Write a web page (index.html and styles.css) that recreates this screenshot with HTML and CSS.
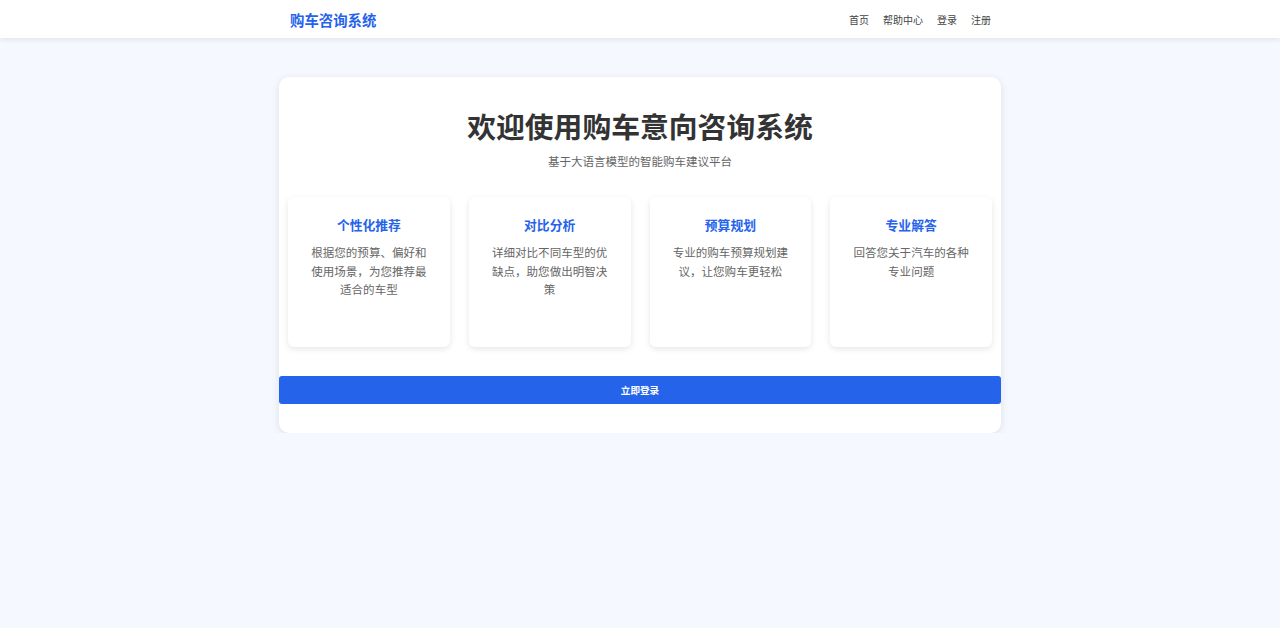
FILE: index.html
```html
<!DOCTYPE html>
<html lang="zh-CN">
<head>
<meta charset="utf-8">
<title>购车咨询系统</title>
<link rel="stylesheet" href="styles.css">
</head>
<body>
<header class="navbar">
  <div class="nav-inner">
    <a class="logo" href="#">购车咨询系统</a>
    <nav class="nav-links">
      <a href="#">首页</a>
      <a href="#">帮助中心</a>
      <a href="#">登录</a>
      <a href="#">注册</a>
    </nav>
  </div>
</header>
<main class="main">
  <section class="welcome-card">
    <h1 class="title">欢迎使用购车意向咨询系统</h1>
    <p class="subtitle">基于大语言模型的智能购车建议平台</p>
    <div class="features">
      <div class="feature">
        <h3 class="feature-title">个性化推荐</h3>
        <p class="feature-desc">根据您的预算、偏好和使用场景，为您推荐最适合的车型</p>
      </div>
      <div class="feature">
        <h3 class="feature-title">对比分析</h3>
        <p class="feature-desc">详细对比不同车型的优缺点，助您做出明智决策</p>
      </div>
      <div class="feature">
        <h3 class="feature-title">预算规划</h3>
        <p class="feature-desc">专业的购车预算规划建议，让您购车更轻松</p>
      </div>
      <div class="feature">
        <h3 class="feature-title">专业解答</h3>
        <p class="feature-desc">回答您关于汽车的各种专业问题</p>
      </div>
    </div>
    <button class="login-btn" type="button">立即登录</button>
  </section>
</main>
</body>
</html>
```

FILE: styles.css
```css
* { box-sizing: border-box; }

body {
  margin: 0;
  background: #f5f8fe;
  font-family: "Noto Sans CJK SC", "Noto Sans", "Liberation Sans", sans-serif;
  color: #333;
}

a { text-decoration: none; }

.navbar {
  height: 38px;
  background: #fff;
  box-shadow: 0 2px 5px rgba(0, 0, 0, 0.08);
}

.nav-inner {
  width: 700px;
  height: 100%;
  margin: 0 auto;
  display: flex;
  align-items: center;
  justify-content: space-between;
}

.logo {
  font-size: 14.4px;
  font-weight: 700;
  color: #2563eb;
}

.nav-links {
  display: flex;
  gap: 14px;
  margin-right: -1px;
}

.nav-links a {
  font-size: 10px;
  color: #444;
}

.main {
  padding-top: 39px;
}

.welcome-card {
  width: 722px;
  margin: 0 auto;
  background: #fff;
  border-radius: 10px;
  box-shadow: 0 2px 8px rgba(0, 0, 0, 0.1);
  padding: 32px 0 29px;
  text-align: center;
}

.title {
  margin: 0;
  font-size: 28.8px;
  line-height: 1.2;
  font-weight: 700;
  color: #333;
}

.subtitle {
  margin: 9px 0 0;
  font-size: 11.52px;
  line-height: 1.5;
  color: #666;
}

.features {
  display: grid;
  grid-template-columns: repeat(4, 1fr);
  gap: 19px;
  padding: 0 9px;
  margin-top: 27px;
}

.feature {
  height: 150px;
  background: #fff;
  border-radius: 6px;
  box-shadow: 0 2px 6px rgba(0, 0, 0, 0.1);
  padding: 20px 19px 0;
}

.feature-title {
  margin: 0;
  font-size: 12.8px;
  line-height: 1.2;
  font-weight: 700;
  color: #2563eb;
}

.feature-desc {
  margin: 11px 0 0;
  font-size: 11.52px;
  line-height: 1.6;
  color: #666;
}

.login-btn {
  display: block;
  width: 100%;
  height: 28px;
  margin-top: 29px;
  border: none;
  border-radius: 3px;
  background: #2563eb;
  color: #fff;
  font-family: inherit;
  font-size: 9.6px;
  font-weight: 700;
  cursor: pointer;
}
```
